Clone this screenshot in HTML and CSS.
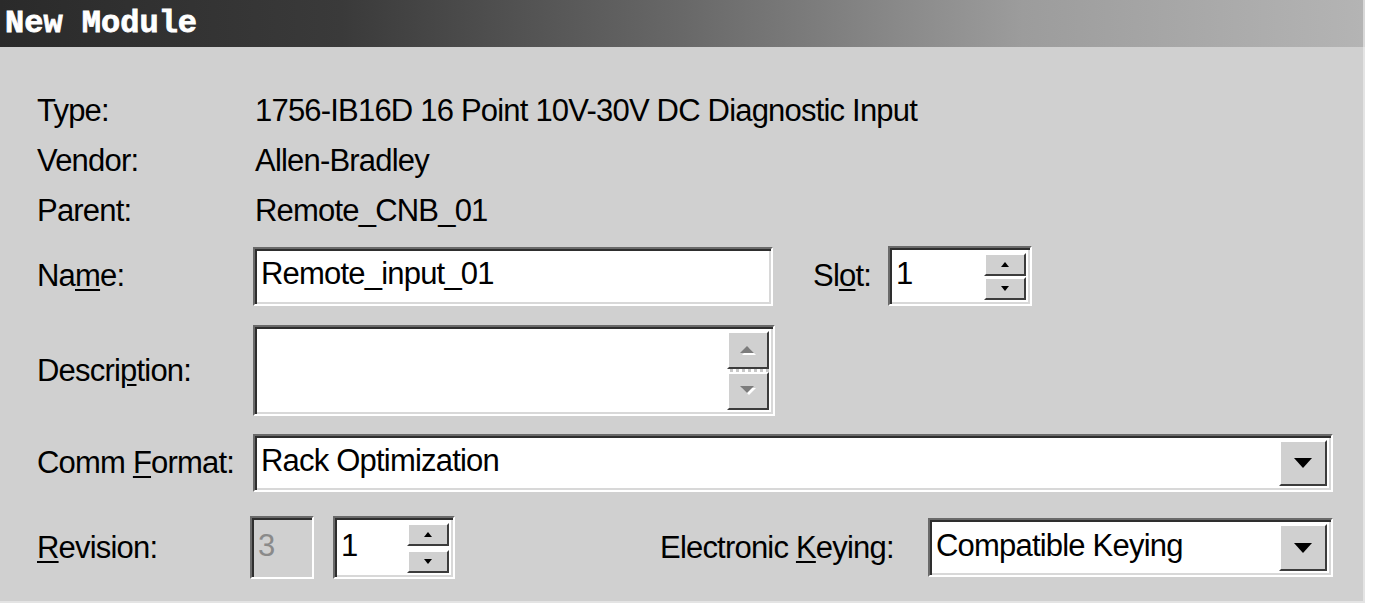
FILE: index.html
```html
<!DOCTYPE html>
<html>
<head>
<meta charset="utf-8">
<title>New Module</title>
<link rel="stylesheet" href="styles.css">
</head>
<body>
<div class="dialog">
  <div class="titlebar"><span class="title">New Module</span></div>
  <div class="content">
    <div class="info-row"><span class="label">Type:</span><span class="value">1756-IB16D 16 Point 10V-30V DC Diagnostic Input</span></div>
    <div class="info-row"><span class="label">Vendor:</span><span class="value">Allen-Bradley</span></div>
    <div class="info-row"><span class="label">Parent:</span><span class="value">Remote_CNB_01</span></div>

    <div class="row row-name">
      <span class="label">Na<u>m</u>e:</span>
      <div class="field field-name"><span class="field-text">Remote_input_01</span></div>
      <span class="slot-label">Sl<u>o</u>t:</span>
      <div class="field field-slot">
        <span class="field-text">1</span>
        <div class="spin">
          <div class="spin-btn"><svg width="8" height="5" viewBox="0 0 8 5"><path d="M4 0 L8 5 H0Z" fill="#000"/></svg></div>
          <div class="spin-btn"><svg width="8" height="5" viewBox="0 0 8 5"><path d="M0 0 H8 L4 5Z" fill="#000"/></svg></div>
        </div>
      </div>
    </div>

    <div class="row row-desc">
      <span class="label">Descri<u>p</u>tion:</span>
      <div class="field field-desc">
        <span class="field-text"></span>
        <div class="vscroll">
          <div class="scroll-btn"><svg width="16" height="10" viewBox="0 0 16 10"><path d="M9 3 L16 10 H2Z" fill="#fff"/><path d="M7 1 L14 8 H0Z" fill="#7c7c7c"/></svg></div>
          <div class="scroll-track"></div>
          <div class="scroll-btn"><svg width="16" height="10" viewBox="0 0 16 10"><path d="M2 2 H16 L9 9Z" fill="#fff"/><path d="M0 0 H14 L7 7Z" fill="#7c7c7c"/></svg></div>
        </div>
      </div>
    </div>

    <div class="row row-comm">
      <span class="label">Comm <u>F</u>ormat:</span>
      <div class="field field-comm">
        <span class="field-text">Rack Optimization</span>
        <div class="drop-btn"><svg width="18" height="10" viewBox="0 0 18 10"><path d="M0 0 H18 L9 10Z" fill="#000"/></svg></div>
      </div>
    </div>

    <div class="row row-rev">
      <span class="label label-rev"><u>R</u>evision:</span>
      <div class="field field-major"><span class="field-text">3</span></div>
      <div class="field field-minor">
        <span class="field-text">1</span>
        <div class="spin">
          <div class="spin-btn"><svg width="8" height="5" viewBox="0 0 8 5"><path d="M4 0 L8 5 H0Z" fill="#000"/></svg></div>
          <div class="spin-btn"><svg width="8" height="5" viewBox="0 0 8 5"><path d="M0 0 H8 L4 5Z" fill="#000"/></svg></div>
        </div>
      </div>
      <span class="keying-label">Electronic <u>K</u>eying:</span>
      <div class="field field-keying">
        <span class="field-text">Compatible Keying</span>
        <div class="drop-btn"><svg width="18" height="10" viewBox="0 0 18 10"><path d="M0 0 H18 L9 10Z" fill="#000"/></svg></div>
      </div>
    </div>
  </div>
</div>
</body>
</html>
```

FILE: styles.css
```css
* { box-sizing: border-box; }

body {
  margin: 0;
  background: #ffffff;
  font-family: "Liberation Sans", Arial, sans-serif;
}

.dialog {
  width: 1365px;
  height: 603px;
  display: flex;
  flex-direction: column;
}

.titlebar {
  height: 47px;
  flex: none;
  display: flex;
  align-items: center;
  padding-left: 5px;
  background: linear-gradient(to right, #2a2a2a 0%, #3a3a3a 25%, #686868 50%, #9c9c9c 75%, #b4b4b4 100%);
  border-right: 2px solid #d8d8d8;
}

.title {
  font-family: "Liberation Mono", "DejaVu Sans Mono", monospace;
  font-weight: bold;
  font-size: 32px;
  letter-spacing: 0;
  color: #ffffff;
  line-height: 1;
  -webkit-text-stroke: 0.8px #ffffff;
}

.content {
  flex: 1;
  background: #d0d0d0;
  padding: 39px 0 0 37px;
  font-size: 31px;
  letter-spacing: -0.8px;
  color: #000;
  border-right: 2px solid #e4e4e4;
  border-bottom: 2px solid #e4e4e4;
}

u { text-decoration-thickness: 2px; text-underline-offset: 3px; }

.info-row {
  height: 50px;
  display: flex;
  align-items: center;
}

.label {
  width: 218px;
  flex: none;
}

.row {
  display: flex;
  align-items: center;
}

.row-name { margin-top: 10px; }
.row-desc { margin-top: 19px; }
.row-comm { margin-top: 18px; }
.row-rev { margin-top: 24px; }

.field {
  display: flex;
  align-items: stretch;
  background: #fff;
  border: 2px solid;
  border-color: #6a6a6a #ffffff #ffffff #6a6a6a;
  box-shadow: inset 2px 2px 0 #2e2e2e, inset -2px -2px 0 #d8d8d8;
  flex: none;
}

.field-text {
  flex: 1;
  display: flex;
  align-items: center;
  padding-left: 6px;
  padding-bottom: 4px;
  white-space: nowrap;
}

.field-name { margin-left: -2px; width: 520px; height: 59px; }

.slot-label { margin-left: 40px; width: 75px; flex: none; }

.field-slot { width: 144px; height: 60px; }

.spin {
  display: flex;
  flex-direction: column;
  justify-content: space-between;
  padding: 5px 4px 4px 0;
  width: 46px;
}

.spin-btn {
  height: 23px;
  background: #d0d0d0;
  border: 2px solid;
  border-color: #ffffff #3c3c3c #3c3c3c #ffffff;
  display: flex;
  align-items: center;
  justify-content: center;
}

.field-desc { margin-left: -2px; width: 522px; height: 91px; }

.vscroll {
  width: 48px;
  display: flex;
  flex-direction: column;
  padding: 4px 4px 4px 2px;
}

.scroll-btn {
  height: 38px;
  background: #d0d0d0;
  border: 2px solid;
  border-color: #ffffff #3c3c3c #3c3c3c #ffffff;
  display: flex;
  align-items: center;
  justify-content: center;
}

.scroll-track {
  flex: 1;
  background: repeating-linear-gradient(to right, #ffffff 0 3px, #c8c8c8 3px 6px);
}

.field-comm { margin-left: -2px; width: 1080px; height: 58px; }

.drop-btn {
  width: 48px;
  margin: 4px 4px 4px 0;
  background: #d0d0d0;
  border: 2px solid;
  border-color: #ffffff #3c3c3c #3c3c3c #ffffff;
  display: flex;
  align-items: center;
  justify-content: center;
}

.field-major {
  margin-left: -5px;
  width: 64px;
  height: 63px;
  background: #d0d0d0;
  color: #8a8a8a;
  box-shadow: inset 2px 2px 0 #2e2e2e;
}

.field-minor {
  margin-left: 19px;
  width: 122px;
  height: 63px;
}

.keying-label {
  margin-left: 205px;
  width: 268px;
  flex: none;
}

.field-keying { width: 405px; height: 59px; }
```
